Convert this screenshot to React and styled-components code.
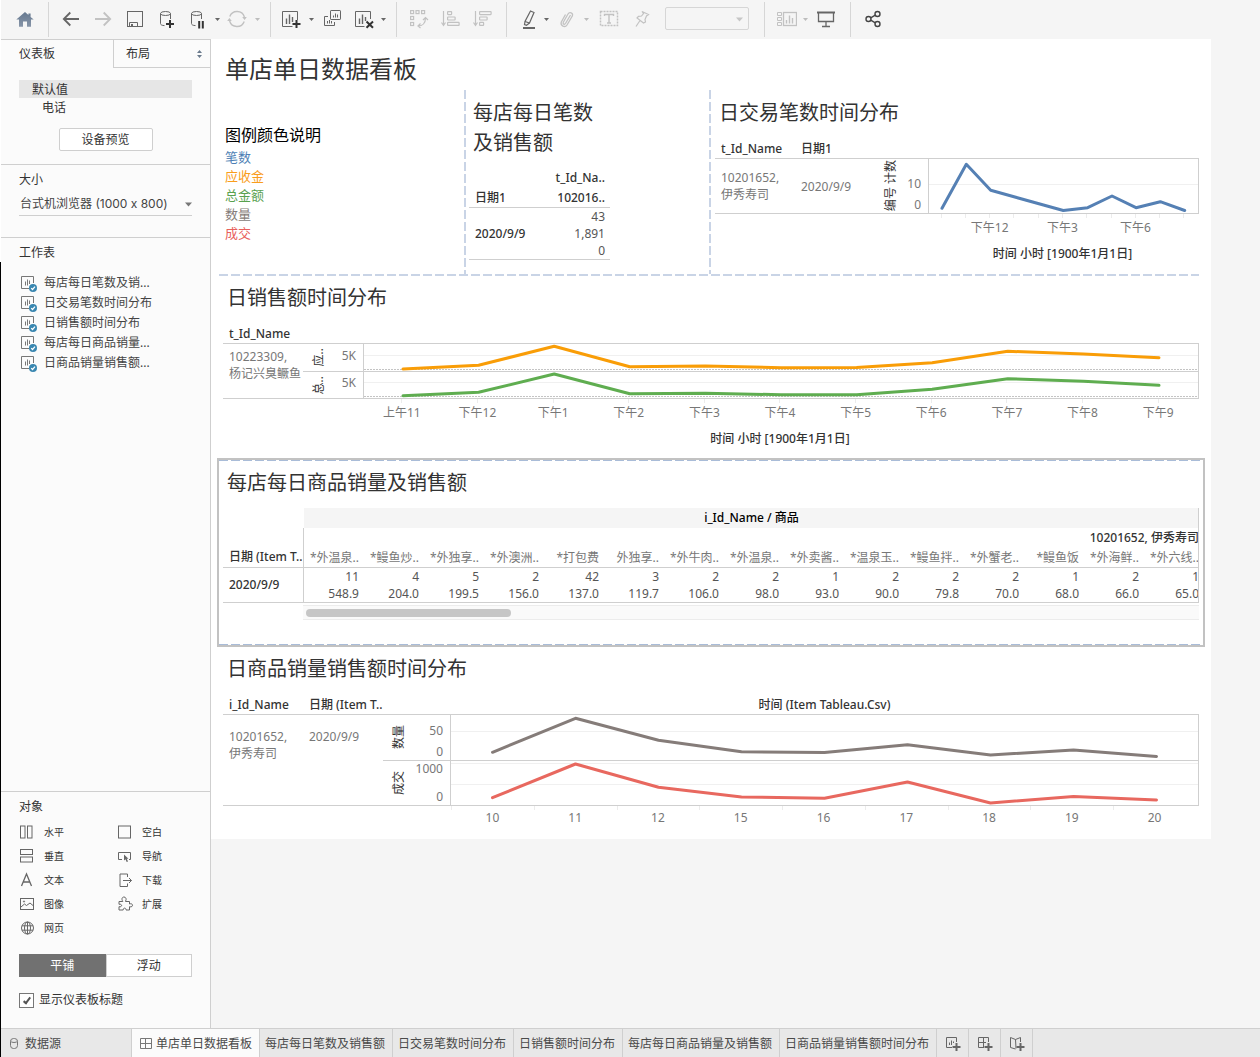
import React from "react";
import styled, { createGlobalStyle } from "styled-components";

const LINE = "#cfcfcf";
const DASH = "#c9d4e6";
const DASH_STRONG = "#a9bcd8";

const GlobalStyle = createGlobalStyle`
  *, *::before, *::after { box-sizing: border-box; }
  body {
    margin: 0;
    background: #f5f5f5;
    color: #333;
    font-family: "Noto Sans", "Noto Sans CJK SC", sans-serif;
    font-size: 12px;
    line-height: 16px;
  }
  button, select, input {
    margin: 0;
    padding: 0;
    border: 0;
    background: none;
    color: inherit;
    font: inherit;
  }
  button { cursor: pointer; }
  h1, h2, h3, p, ul { margin: 0; padding: 0; font-weight: 400; }
  ul { list-style: none; }
  svg { display: block; }
`;

const Page = styled.div`
  display: flex;
  flex-direction: column;
  min-height: 100vh;
  padding-left: 1px;
  background: linear-gradient(to bottom, #fff 262px, #000 262px) left top / 1px 100% no-repeat;
`;

/* ---------- toolbar ---------- */

const Toolbar = styled.header`
  display: flex;
  align-items: center;
  height: 39px;
  background: #f5f5f5;
`;

const ToolGroup = styled.div`
  display: flex;
  align-items: flex-start;
  height: 35px;
  padding: ${(p) => p.$pad};
  border-right: ${(p) => (p.$last ? "0" : "1px solid #d6d6d6")};
`;

const ToolButton = styled.button`
  display: flex;
  align-items: center;
  justify-content: center;
  width: ${(p) => p.$w || 32}px;
  height: 28px;
  color: ${(p) => (p.$off ? "#c2c2c2" : "#666")};
`;

const CaretButton = styled.button`
  display: flex;
  align-items: center;
  justify-content: center;
  width: 8px;
  height: 28px;
  color: ${(p) => (p.$off ? "#bdbdbd" : "#666")};
`;

const FitBox = styled.div`
  position: relative;
  width: 84px;
  margin: 2px 0 0 8px;
`;

const FitSelect = styled.select`
  display: block;
  width: 100%;
  height: 23px;
  border: 1px solid #d6d6d6;
  border-radius: 2px;
  appearance: none;
`;

const SelectCaret = styled.span`
  position: absolute;
  right: ${(p) => p.$right}px;
  top: 50%;
  margin-top: -2px;
  color: ${(p) => p.$color};
  pointer-events: none;
`;

const Caret = ({ size = 5 }) => (
  <svg width={size} height={Math.ceil(size * 0.6)} viewBox="0 0 10 6" aria-hidden="true">
    <path d="M0 0H10L5 6Z" fill="currentColor" />
  </svg>
);

const Icon = ({ children, sw = 1 }) => (
  <svg width="20" height="20" viewBox="0 0 20 20" fill="none" stroke="currentColor" strokeWidth={sw} aria-hidden="true">
    {children}
  </svg>
);

const HomeIcon = () => (
  <Icon>
    <defs>
      <linearGradient id="home" x1="0" y1="0" x2="0" y2="1">
        <stop offset="0" stopColor="#65788f" />
        <stop offset="1" stopColor="#8795a8" />
      </linearGradient>
    </defs>
    <path d="M10 3 1.3 10.6H4V17.7H8V12.5H12V17.7H16V10.6H18.7L15.6 7.9V4.4H13.4V6Z" fill="url(#home)" stroke="none" />
  </Icon>
);
const BackIcon = () => (
  <Icon sw={1.8}><path d="M18 10H3M9.3 3.5 2.8 10 9.3 16.5" /></Icon>
);
const ForwardIcon = () => (
  <Icon sw={1.8}><path d="M2 10H17M10.7 3.5 17.2 10 10.7 16.5" /></Icon>
);
const SaveIcon = () => (
  <Icon>
    <rect x="2.5" y="2.5" width="15" height="15" />
    <path d="M4.5 17.5V13.5H12.5V17.5" />
    <rect x="6" y="15" width="2" height="2.5" fill="currentColor" stroke="none" />
  </Icon>
);
const Cylinder = () => (
  <>
    <ellipse cx="8.5" cy="4.5" rx="5" ry="2" />
    <path d="M3.5 4.5V14.5C3.5 15.8 5 16.5 7.5 16.6M13.5 4.5V10" />
  </>
);
const DataPlusIcon = () => (
  <Icon><Cylinder /><path d="M13 11V19M9 15H17" stroke="#333" strokeWidth="2" /></Icon>
);
const DataPauseIcon = () => (
  <Icon><Cylinder /><path d="M11.2 12V19.5M14.8 12V19.5" stroke="#333" strokeWidth="2" /></Icon>
);
const RefreshIcon = () => (
  <Icon>
    <path d="M2.8 7.6A7.7 7.7 0 0 1 17.4 8M17.2 12.4A7.7 7.7 0 0 1 2.6 12" strokeWidth="1.4" />
    <path d="M15.2 8H19.8L17.6 11ZM.2 12H4.8L2.4 9Z" fill="currentColor" stroke="none" />
  </Icon>
);
const NewSheetIcon = () => (
  <Icon>
    <path d="M11.5 17.5H1.5V2.5H16.5V11" />
    <path d="M5.5 9.5V15M8.5 5.5V15M11.5 8V13" strokeWidth="1.4" />
    <path d="M15.5 11V19M11.5 15H19.5" stroke="#333" strokeWidth="2" />
  </Icon>
);
const DuplicateIcon = () => (
  <Icon>
    <rect x="8.5" y="1.5" width="10" height="9" rx=".6" />
    <path d="M11.5 6.5V8.5M13.5 4.5V8.5M15.5 5.5V8.5M6 7.5H2.5V16.5H12.5V13M5.5 12V14.5M7.5 11V14.5M9.5 12V14.5" />
  </Icon>
);
const ClearIcon = () => (
  <Icon>
    <path d="M10.5 17.5H1.5V2.5H16.5V10" />
    <path d="M5.5 9.5V15M8.5 5.5V15M11.5 8V12" strokeWidth="1.4" />
    <path d="M12.5 12.5 19 18.8M19 12.5 12.5 18.8" stroke="#333" strokeWidth="2" />
  </Icon>
);
const SwapIcon = () => (
  <Icon sw={1.2}>
    <rect x="1.6" y="1.6" width="3" height="3" /><rect x="7" y="1.6" width="3" height="3" />
    <rect x="12.6" y="1.6" width="3" height="3" /><rect x="1.6" y="7.5" width="3" height="3" />
    <rect x="1.6" y="13.5" width="3" height="3" />
    <path d="M9 17C13.5 17 16.5 14 16.5 9M11.5 14.5 9 17 11.5 19M14 11 16.5 8.5 19 11" />
  </Icon>
);
const SortAscIcon = () => (
  <Icon sw={1.2}>
    <path d="M2.5 2V16M.5 13.5 2.5 16.5 4.5 13.5" />
    <rect x="6.6" y="2.6" width="4" height="3" rx=".5" /><rect x="6.6" y="8" width="7.5" height="3" rx=".5" /><rect x="6.6" y="13.4" width="11.5" height="3" rx=".5" />
  </Icon>
);
const SortDescIcon = () => (
  <Icon sw={1.2}>
    <path d="M2.5 2V16M.5 13.5 2.5 16.5 4.5 13.5" />
    <rect x="6.6" y="2.6" width="11.5" height="3" rx=".5" /><rect x="6.6" y="8" width="7.5" height="3" rx=".5" /><rect x="6.6" y="13.4" width="4" height="3" rx=".5" />
  </Icon>
);
const HighlighterIcon = () => (
  <Icon sw={1.2}>
    <path d="M11.5 2 15 3.5 10.5 14 6 12.5ZM6 12.5 5.5 15.5 7.5 16.3 10.5 14" />
    <path d="M4 19H16" strokeWidth="2" />
  </Icon>
);
const ClipIcon = () => (
  <Icon sw={1.3}>
    <path d="M14.5 6 9.5 14.5C8.5 16 6.5 15 7.3 13.3L12 5C13.5 2.5 17.5 4 16.3 7L11 16C9 19 4 17 5.3 13L9.5 5.5" />
  </Icon>
);
const TextIcon = () => (
  <Icon>
    <rect x="1.5" y="2.5" width="17" height="14" strokeWidth="1.5" strokeDasharray="2 1" />
    <path d="M5.5 7V5.5H14.5V7M10 5.5V14M8 14H12" strokeWidth="1.4" />
  </Icon>
);
const PinIcon = () => (
  <Icon sw={1.2}>
    <path d="M10 2.5 16.5 5.5 14.5 7 13 10.5 13.5 13 11.5 14 5 9 6.500 7.300 9.500 7 11.500 4.500ZM8 11.5 4 17.500" />
  </Icon>
);
const CardsIcon = () => (
  <Icon>
    <path d="M.5 3.5H4.5V6.5H.5ZM.5 8.5H4.5V11.5H.5ZM.5 13.5H4.5V16.5H.5Z" />
    <rect x="6.5" y="3.5" width="13" height="13" strokeWidth="1.3" />
    <path d="M9.5 11V14.5M12.5 6.5V14.5M15.5 9V14.5" strokeWidth="1.4" />
  </Icon>
);
const PresentIcon = () => (
  <Icon>
    <path d="M1 3.5H19" strokeWidth="2" />
    <path d="M2.5 4V12.5H17.5V4M10 12.5V17.5M6 17.5H14" strokeWidth="1.3" />
  </Icon>
);
const ShareIcon = () => (
  <Icon sw={1.4}>
    <g stroke="#444"><circle cx="5.5" cy="10" r="2.5" /><circle cx="14.5" cy="5" r="2.5" /><circle cx="14.5" cy="15" r="2.5" />
    <path d="M7.7 8.8 12.3 6.2M7.7 11.2 12.3 13.8" /></g>
  </Icon>
);

const Tool = ({ label, icon: Glyph, off, w }) => (
  <ToolButton type="button" aria-label={label} $off={off} $w={w}><Glyph /></ToolButton>
);
const More = ({ label, off }) => (
  <CaretButton type="button" aria-label={label} $off={off}><Caret /></CaretButton>
);

/* ---------- side pane ---------- */

const Workspace = styled.div`
  display: flex;
  flex: 1;
`;

const Side = styled.aside`
  display: flex;
  flex-direction: column;
  flex: 0 0 210px;
  border-top: 1px solid ${LINE};
  border-right: 1px solid ${LINE};
  background: #fbfbfb;
`;

const SideTabs = styled.div`
  display: flex;
  height: 28px;
`;

const SideTab = styled.button`
  display: flex;
  align-items: center;
  justify-content: space-between;
  flex: ${(p) => (p.$active ? "0 0 112px" : "1")};
  padding: ${(p) => (p.$active ? "0 18px" : "0 8px 0 12px")};
  border: solid ${LINE};
  border-width: ${(p) => (p.$active ? "0" : "0 0 1px 1px")};
`;

const SideSection = styled.section`
  display: flex;
  flex-direction: column;
  padding: ${(p) => p.$pad};
  flex: ${(p) => (p.$grow ? "1" : "none")};
  border-bottom: ${(p) => (p.$last ? "0" : `1px solid ${LINE}`)};
`;

const SideTitle = styled.h2`
  font-size: 12px;
  line-height: 16px;
`;

const DeviceItem = styled.button`
  height: 18px;
  padding: 2px 0 0 ${(p) => (p.$active ? 13 : 23)}px;
  background: ${(p) => (p.$active ? "#e6e6e6" : "none")};
  text-align: left;
`;

const PreviewButton = styled.button`
  align-self: center;
  width: 94px;
  height: 23px;
  margin: 12px 0 0;
  border: 1px solid ${LINE};
  border-radius: 2px;
  background: #fff;
`;

const SizeBox = styled.div`
  position: relative;
  margin-top: 4px;
`;

const SizeSelect = styled.select`
  display: block;
  width: 100%;
  height: 24px;
  padding-left: 1px;
  border-bottom: 1px solid ${LINE};
  appearance: none;
  font-family: Inter, "Noto Sans CJK SC", sans-serif;
  color: #444;
`;

const SheetList = styled.ul`
  margin-top: 12px;
`;

const SheetItem = styled.li`
  display: flex;
  align-items: center;
  gap: 6px;
  height: 20px;
  padding-left: 2px;
  color: #444;
`;

const ObjectGrid = styled.div`
  display: grid;
  grid-template-columns: 98px 1fr;
  grid-auto-rows: 24px;
  margin-top: 5px;
`;

const ObjectButton = styled.button`
  display: flex;
  align-items: center;
  gap: 8px;
  padding-left: 1px;
  font-size: 10px;
  svg { color: #666; }
`;

const Toggle = styled.div`
  display: flex;
  height: 23px;
  margin-top: 14px;
`;

const ToggleButton = styled.button`
  flex: 1;
  border: 1px solid ${(p) => (p.$active ? "#717171" : LINE)};
  background: ${(p) => (p.$active ? "#717171" : "#fff")};
  color: ${(p) => (p.$active ? "#fff" : "#333")};
`;

const CheckLabel = styled.label`
  display: flex;
  align-items: center;
  gap: 5px;
  margin-top: 15px;
`;

const Check = styled.input`
  display: grid;
  place-items: center;
  width: 15px;
  height: 15px;
  border: 1px solid #777;
  background: #fff;
  appearance: none;
  &:checked::after {
    content: "";
    width: 4px;
    height: 8px;
    border: solid #555;
    border-width: 0 2px 2px 0;
    transform: rotate(38deg);
  }
`;

const SheetIcon = () => (
  <svg width="17" height="17" viewBox="0 0 17 17" fill="none" aria-hidden="true">
    <path d="M8 13.5H.5V1.5H12.5V8" stroke="#777" />
    <path d="M4.5 6.5V10.5M6.5 4.5V10.5M8.5 5.5V9" stroke="#777" />
    <circle cx="12" cy="13" r="4" fill="#3a87b0" />
    <path d="M10.2 13.2 11.5 14.5 14 11.6" stroke="#fff" strokeWidth="1.2" />
  </svg>
);

const Small = ({ children }) => (
  <svg width="16" height="16" viewBox="0 0 16 16" fill="none" stroke="currentColor" aria-hidden="true">{children}</svg>
);

const objects = [
  ["水平", <Small><rect x=".5" y="2" width="4.5" height="12" /><rect x="7.5" y="2" width="4.5" height="12" /></Small>],
  ["空白", <Small><rect x=".5" y="2" width="12" height="12" /></Small>],
  ["垂直", <Small><rect x=".5" y="1.5" width="12" height="5" /><rect x=".5" y="9" width="12" height="5" /></Small>],
  ["导航", <Small><path d="M4 11.5H.5V4.5H12.5V11.5H11" /><path d="M6 6.5V12.5L7.5 11.3 8.7 14 10 13.4 8.8 10.8H10.5Z" fill="currentColor" stroke="none" /></Small>],
  ["文本", <Small><path d="M1.5 14 6.5 2 11.5 14M3.3 10H9.7" strokeWidth="1.3" /></Small>],
  ["下载", <Small><path d="M9.5 5V2H2V14.5H9.5V11.5M5 8.5H13.5M11 6 13.5 8.5 11 11" /></Small>],
  ["图像", <Small><rect x=".5" y="2.5" width="13" height="11" /><path d="M1 11 4.5 8 6.5 9.5 10 7 13 9.5" /><circle cx="4" cy="5.5" r=".6" /></Small>],
  ["扩展", <Small><path d="M1 5.5H4.8C3 2.5 4.5 1 6 1S9 2.5 7.5 5.5H11.5V8C15.5 6.5 15.5 12 11.5 10.7V14H8C8.3 11.5 5 11.5 5.2 14H1V10.7C4.5 11.5 4.5 7.5 1 8.3Z" /></Small>],
  ["网页", <Small><circle cx="7.5" cy="8" r="6" /><ellipse cx="7.5" cy="8" rx="3" ry="6" /><path d="M7.5 2V14M2 5.8H13M2 10.2H13" /></Small>],
];

const SortMark = () => (
  <svg width="5" height="8" viewBox="0 0 5 8" fill="#6b7b8d" aria-hidden="true">
    <path d="M2.5 0 5 3H0ZM2.5 8 0 5H5Z" />
  </svg>
);

/* ---------- dashboard ---------- */

const Canvas = styled.main`
  flex: 0 1 1000px;
  min-width: 0;
  min-height: 800px;
  align-self: flex-start;
  background: #fff;
`;

const DashTitle = styled.h1`
  padding: 9px 14px 0;
  font-size: 24px;
  line-height: 42px;
`;

const hDash = (c) => `repeating-linear-gradient(to right, ${c} 0 9px, transparent 9px 12px)`;
const vDash = `repeating-linear-gradient(to bottom, ${DASH} 0 9px, transparent 9px 12px)`;

const TopRow = styled.div`
  display: grid;
  grid-template-columns: 1fr 1fr 2fr;
  margin: 0 12px 0 8px;
  padding-bottom: 2px;
  background: ${hDash(DASH)} left bottom / 100% 2px no-repeat;
`;

const Cell = styled.div`
  padding: ${(p) => p.$pad};
  background: ${(p) => (p.$divided ? `${vDash} left top / 2px 100% no-repeat` : "none")};
`;

const LegendTitle = styled.h2`
  color: #000;
  font-size: 16px;
  line-height: 24px;
`;

const LegendItem = styled.li`
  padding-top: 1px;
  color: ${(p) => p.$color};
  font-size: 13px;
  line-height: 18px;
`;

const Panel = styled.section`
  padding: 7px 12px 11px;
`;

const SelectedPanel = styled.section`
  margin: 0 6px;
  padding: 8px 4px 25px;
  border: 2px solid #c2c2c2;
  background: ${hDash(DASH_STRONG)} left top / 100% 1px no-repeat, ${hDash(DASH_STRONG)} left bottom / 100% 1px no-repeat;
`;

const VizTitle = styled.h2`
  padding-left: 4px;
  font-size: 20px;
  line-height: 30px;
`;

const VizHead = styled.div`
  display: flex;
  height: 18px;
  margin-top: 12px;
  line-height: 18px;
  font-weight: 500;
`;

const HeadCell = styled.span`
  flex: none;
  width: 80px;
  padding-left: 6px;
  white-space: nowrap;
`;

const HeadAxis = styled.span`
  flex: 1;
  text-align: center;
`;

const HeadGap = styled.span`
  flex: none;
  width: ${(p) => p.$w}px;
`;

const VizBody = styled.div`
  display: flex;
  border: solid ${LINE};
  border-width: 1px 1px 1px 0;
`;

const Dim = styled.div`
  display: flex;
  flex: none;
  align-items: ${(p) => (p.$top ? "flex-start" : "center")};
  width: 80px;
  padding: ${(p) => p.$top || 0}px 0 0 6px;
  color: #777;
  line-height: 17px;
  white-space: pre;
`;

const Measures = styled.div`
  flex: 1;
  min-width: 0;
`;

const Measure = styled.div`
  display: flex;
  border-top: ${(p) => (p.$first ? "0" : `1px solid ${LINE}`)};
`;

const Axis = styled.div`
  display: flex;
  flex: none;
  width: ${(p) => p.$w}px;
  height: ${(p) => p.$h}px;
`;

const AxisName = styled.div`
  display: flex;
  align-items: center;
  justify-content: center;
  flex: none;
  width: 32px;
  white-space: nowrap;
  span {
    writing-mode: vertical-rl;
    text-orientation: sideways;
    transform: rotate(180deg);
    line-height: 16px;
  }
`;

const Ticks = styled.div`
  display: flex;
  flex: 1;
  flex-direction: column;
  justify-content: space-between;
  align-items: flex-end;
  padding: ${(p) => p.$top}px 7px 0 0;
  margin-left: -8px;
  color: #777;
`;

const PlotArea = styled.div`
  flex: 1;
  min-width: 0;
  border-left: 1px solid ${LINE};
`;

const Plot = ({ w, h, points, color, grid = [], zero }) => (
  <PlotArea>
    <svg width="100%" height={h} viewBox={`0 0 ${w} ${h}`} preserveAspectRatio="none" fill="none">
      {grid.map((y) => <path key={y} d={`M0 ${y}H${w}`} stroke="#f0f0f0" />)}
      {zero && <path d={`M0 ${zero}H${w}`} stroke="#c4c4c4" strokeDasharray="2 1" vectorEffect="non-scaling-stroke" />}
      <polyline
        points={points.map((p) => p.join(",")).join(" ")}
        stroke={color}
        strokeWidth="3"
        strokeLinecap="round"
        strokeLinejoin="round"
        vectorEffect="non-scaling-stroke"
      />
    </svg>
  </PlotArea>
);

const AxisLabels = styled.div`
  display: grid;
  grid-template-columns: repeat(${(p) => p.$n}, minmax(0, 1fr));
  margin-left: ${(p) => p.$left}px;
  padding: 0 3px 0 1px;
  color: #777;
`;

const AxisLabel = styled.span`
  display: flex;
  justify-content: center;
  padding-top: ${(p) => (p.$edge ? 4 : 6)}px;
  background: linear-gradient(#ececec, #ececec) ${(p) => (p.$edge ? "left" : "center")} top / 1px 4px no-repeat;
  white-space: nowrap;
`;

const AxisTitle = styled.div`
  margin: 10px 0 0 ${(p) => p.$left}px;
  padding-right: 2px;
  text-align: center;
  font-weight: 500;
`;

const Chart = ({ heads, headTitle, dims, dimTop, axisW, w, measures, labels, edge, title }) => {
  const left = dims.length * 80 + axisW;
  return (
    <>
      <VizHead>
        {heads.map((t) => <HeadCell key={t}>{t}</HeadCell>)}
        {headTitle && <><HeadGap $w={axisW} /><HeadAxis>{headTitle}</HeadAxis></>}
      </VizHead>
      <VizBody>
        {dims.map((t) => <Dim key={t} $top={dimTop}>{t}</Dim>)}
        <Measures>
          {measures.map((m, i) => (
            <Measure key={m.name} $first={i === 0}>
              <Axis $w={axisW} $h={m.h}>
                <AxisName><span>{m.name}</span></AxisName>
                <Ticks $top={m.top}>{m.ticks.map((t) => <span key={t}>{t}</span>)}</Ticks>
              </Axis>
              <Plot w={w} h={m.h} points={m.points} color={m.color} grid={m.grid} zero={m.zero} />
            </Measure>
          ))}
        </Measures>
      </VizBody>
      <AxisLabels $n={labels.length} $left={left}>
        {labels.map((t, i) => <AxisLabel key={i} $edge={edge}>{t}</AxisLabel>)}
      </AxisLabels>
      {title && <AxisTitle $left={left}>{title}</AxisTitle>}
    </>
  );
};

const StoreTable = styled.table`
  width: 100%;
  margin-top: 10px;
  border-spacing: 0;
  border-bottom: 1px solid ${LINE};
  th, td { padding: 0 5px 0 6px; }
  th { font-weight: 500; text-align: left; }
  thead th { height: 20px; }
  thead th:last-child, td { text-align: right; }
  thead tr:last-child th { border-bottom: 1px solid ${LINE}; }
  td { height: 17px; color: #555; line-height: 17px; }
`;

const NarrowViz = styled.div`
  width: 141px;
`;

const TableScroll = styled.div`
  margin-top: 10px;
  border-right: 1px solid ${LINE};
  overflow: hidden;
`;

const ItemTable = styled.table`
  width: 981px;
  table-layout: fixed;
  border-spacing: 0;
  th, td { padding: 0 5px 0 0; white-space: nowrap; text-align: right; }
  th { height: 20px; font-weight: 400; }
  td { height: 17px; color: #555; line-height: 17px; }
  tbody tr:last-child td, tbody th { border-bottom: 1px solid ${LINE}; }
`;

const RowHead = styled.th`
  && {
    width: 81px;
    padding: 0 0 0 6px;
    border-right: 1px solid ${LINE};
    border-bottom: 1px solid ${LINE};
    font-weight: 500;
    text-align: left;
    vertical-align: ${(p) => (p.$low ? "bottom" : "middle")};
    line-height: 20px;
  }
`;

const Corner = styled.th`
  width: 81px;
`;

const BandHead = styled.th`
  && {
    background: #f5f5f5;
    color: #000;
    text-align: center;
    font-weight: 500;
  }
`;

const StoreHead = styled.th`
  && { font-weight: 500; }
`;

const ItemHead = styled.th`
  border-bottom: 1px solid ${LINE};
  color: #777;
`;

const ScrollTrack = styled.div`
  height: 15px;
  margin: 2px 0 0 80px;
  padding: 3px;
  border: solid #ececec;
  border-width: 1px 0;
  background: #fafafa;
`;

const ScrollThumb = styled.div`
  width: 23%;
  height: 8px;
  border-radius: 4px;
  background: #c6c6c6;
`;

const legend = [
  ["笔数", "#4e7fb5"], ["应收金", "#f99d1c"], ["总金额", "#59a14f"], ["数量", "#857c79"], ["成交", "#e8605c"],
];

const items = [
  ["*外温泉..", "11", "548.9"], ["*鳗鱼炒..", "4", "204.0"], ["*外独享..", "5", "199.5"],
  ["*外澳洲..", "2", "156.0"], ["*打包费", "42", "137.0"], ["外独享..", "3", "119.7"],
  ["*外牛肉..", "2", "106.0"], ["*外温泉..", "2", "98.0"], ["*外卖酱..", "1", "93.0"],
  ["*温泉玉..", "2", "90.0"], ["*鳗鱼拌..", "2", "79.8"], ["*外蟹老..", "2", "70.0"],
  ["*鳗鱼饭", "1", "68.0"], ["*外海鲜..", "2", "66.0"], ["*外六线..", "1", "65.0"],
];

const byStep = (start, step, ys) => ys.map((y, i) => [start + step * i, y]);

const countMeasures = [{
  name: "编号 计数", h: 54, top: 17, ticks: ["10", "0"], color: "#5580b4", grid: [25.5],
  points: [[13, 49.3], [37.3, 5.3], [61.7, 31.3], [134.3, 51.5], [158.7, 48.7], [183, 37], [207, 48.7], [231.3, 42.7], [255.7, 51.5]],
}];

const salesMeasures = [
  { name: "应..", h: 27, top: 4, ticks: ["5K"], color: "#f99d07", grid: [11.5], zero: 25.5,
    points: byStep(39, 75.6, [25, 21.3, 2.3, 22.7, 22, 23.7, 23.5, 18.7, 7.3, 10, 13.7]) },
  { name: "总..", h: 26, top: 3, ticks: ["5K"], color: "#5fad50", grid: [10.5], zero: 24.5,
    points: byStep(39, 75.6, [23.7, 20.3, 2, 21.7, 21.3, 22.7, 22.7, 17.3, 6.7, 9.3, 13.3]) },
];

const itemMeasures = [
  { name: "数量", h: 45, top: 8, ticks: ["50", "0"], color: "#857c79", grid: [16.5],
    points: byStep(41.5, 83, [37.3, 3.3, 25.3, 36.8, 37.5, 29.8, 40, 35, 41.5]) },
  { name: "成交", h: 44, top: 0, ticks: ["1000", "0"], color: "#e8685f", grid: [2.5, 23.5],
    points: byStep(41.5, 83, [36.7, 3, 26.3, 36, 37.3, 21, 42, 35.5, 39]) },
];

/* ---------- sheet tabs ---------- */

const TabBar = styled.nav`
  display: flex;
  height: 29px;
  border-top: 1px solid ${LINE};
  background: #e8e8e8;
`;

const SheetTab = styled.button`
  display: flex;
  align-items: center;
  gap: 4px;
  flex: none;
  width: ${(p) => (p.$w ? `${p.$w}px` : "auto")};
  padding: 1px 7px 0 ${(p) => (p.$icon ? 8 : 5)}px;
  border-right: 1px solid ${LINE};
  background: ${(p) => (p.$active ? "#fbfbfb" : "none")};
  color: #4a4a4a;
  white-space: nowrap;
`;

const AddTab = styled.button`
  display: flex;
  align-items: center;
  justify-content: center;
  flex: none;
  width: 32px;
  border-right: 1px solid ${LINE};
  color: #666;
`;

const tabs = ["每店每日笔数及销售额", "日交易笔数时间分布", "日销售额时间分布", "每店每日商品销量及销售额", "日商品销量销售额时间分布"];

const Plus = () => <path d="M11.5 8V16M7.5 12H15.5" strokeWidth="2" />;

export default function App() {
  return (
    <>
      <GlobalStyle />
      <Page>
        <Toolbar>
          <ToolGroup $pad="3px 7px 0 8px">
            <Tool label="主页" icon={HomeIcon} />
          </ToolGroup>
          <ToolGroup $pad="3px 9px 0 6px">
            <Tool label="撤消" icon={BackIcon} />
            <Tool label="重做" icon={ForwardIcon} off />
            <Tool label="保存" icon={SaveIcon} />
            <Tool label="新建数据源" icon={DataPlusIcon} />
            <Tool label="暂停自动更新" icon={DataPauseIcon} w={30} />
            <More label="更新选项" />
            <Tool label="运行更新" icon={RefreshIcon} off />
            <More label="运行选项" off />
          </ToolGroup>
          <ToolGroup $pad="3px 9px 0 4px">
            <Tool label="新建工作表" icon={NewSheetIcon} />
            <More label="新建选项" />
            <Tool label="复制工作表" icon={DuplicateIcon} w={34} />
            <Tool label="清除工作表" icon={ClearIcon} w={30} />
            <More label="清除选项" />
          </ToolGroup>
          <ToolGroup $pad="3px 7px 0 6px">
            <Tool label="交换行和列" icon={SwapIcon} off />
            <Tool label="升序排序" icon={SortAscIcon} off />
            <Tool label="降序排序" icon={SortDescIcon} off />
          </ToolGroup>
          <ToolGroup $pad="3px 15px 0 9px">
            <Tool label="突出显示" icon={HighlighterIcon} w={26} />
            <More label="突出显示选项" />
            <Tool label="组成员" icon={ClipIcon} w={32} off />
            <More label="组选项" off />
            <Tool label="显示标记标签" icon={TextIcon} w={37} off />
            <Tool label="固定轴" icon={PinIcon} w={30} off />
            <FitBox>
              <FitSelect aria-label="适合"><option value="" /></FitSelect>
              <SelectCaret $right={6} $color="#c6c6c6"><Caret size={7} /></SelectCaret>
            </FitBox>
          </ToolGroup>
          <ToolGroup $pad="3px 7px 0 8px">
            <Tool label="显示卡" icon={CardsIcon} w={28} off />
            <More label="卡选项" off />
            <Tool label="演示模式" icon={PresentIcon} w={34} />
          </ToolGroup>
          <ToolGroup $pad="3px 6px 0 6px" $last>
            <Tool label="共享" icon={ShareIcon} />
          </ToolGroup>
        </Toolbar>

        <Workspace>
          <Side>
            <SideTabs>
              <SideTab type="button" $active>仪表板</SideTab>
              <SideTab type="button">布局<SortMark /></SideTab>
            </SideTabs>
            <SideSection $pad="12px 18px 13px">
              <DeviceItem type="button" $active>默认值</DeviceItem>
              <DeviceItem type="button">电话</DeviceItem>
              <PreviewButton type="button">设备预览</PreviewButton>
            </SideSection>
            <SideSection $pad="7px 18px 21px">
              <SideTitle as="label" htmlFor="size">大小</SideTitle>
              <SizeBox>
                <SizeSelect id="size"><option>台式机浏览器 (1000 x 800)</option></SizeSelect>
                <SelectCaret $right={0} $color="#777"><Caret size={7} /></SelectCaret>
              </SizeBox>
            </SideSection>
            <SideSection $pad="7px 18px" $grow>
              <SideTitle>工作表</SideTitle>
              <SheetList>
                {["每店每日笔数及销...", "日交易笔数时间分布", "日销售额时间分布", "每店每日商品销量...", "日商品销量销售额..."].map((t) => (
                  <SheetItem key={t}><SheetIcon />{t}</SheetItem>
                ))}
              </SheetList>
            </SideSection>
            <SideSection $pad="7px 18px 20px" $last>
              <SideTitle>对象</SideTitle>
              <ObjectGrid>
                {objects.map(([name, icon]) => (
                  <ObjectButton type="button" key={name}>{icon}{name}</ObjectButton>
                ))}
              </ObjectGrid>
              <Toggle>
                <ToggleButton type="button" $active>平铺</ToggleButton>
                <ToggleButton type="button">浮动</ToggleButton>
              </Toggle>
              <CheckLabel><Check type="checkbox" defaultChecked />显示仪表板标题</CheckLabel>
            </SideSection>
          </Side>

          <Canvas>
            <DashTitle>单店单日数据看板</DashTitle>
            <TopRow>
              <Cell $pad="33px 6px 0">
                <LegendTitle>图例颜色说明</LegendTitle>
                <ul>
                  {legend.map(([name, color]) => <LegendItem key={name} $color={color}>{name}</LegendItem>)}
                </ul>
              </Cell>
              <Cell $pad="8px 0 0 5px" $divided>
                <NarrowViz>
                  <VizTitle>每店每日笔数及销售额</VizTitle>
                  <StoreTable>
                    <thead>
                      <tr><th /><th>t_Id_Na..</th></tr>
                      <tr><th>日期1</th><th>102016..</th></tr>
                    </thead>
                    <tbody>
                      <tr><th rowSpan={3}>2020/9/9</th><td>43</td></tr>
                      <tr><td>1,891</td></tr>
                      <tr><td>0</td></tr>
                    </tbody>
                  </StoreTable>
                </NarrowViz>
              </Cell>
              <Cell $pad="8px 0 12px 6px" $divided>
                <VizTitle>日交易笔数时间分布</VizTitle>
                <Chart
                  heads={["t_Id_Name", "日期1"]}
                  dims={["10201652,\n伊秀寿司", "2020/9/9"]}
                  axisW={53}
                  w={269}
                  measures={countMeasures}
                  labels={["", "", "下午12", "", "", "下午3", "", "", "下午6", "", ""]}
                  title="时间 小时 [1900年1月1日]"
                />
              </Cell>
            </TopRow>

            <Panel>
              <VizTitle>日销售额时间分布</VizTitle>
              <Chart
                heads={["t_Id_Name"]}
                dims={["10223309,\n杨记兴臭鳜鱼"]}
                dimTop={4}
                axisW={60}
                w={834}
                measures={salesMeasures}
                labels={["上午11", "下午12", "下午1", "下午2", "下午3", "下午4", "下午5", "下午6", "下午7", "下午8", "下午9"]}
                title="时间 小时 [1900年1月1日]"
              />
            </Panel>

            <SelectedPanel>
              <VizTitle>每店每日商品销量及销售额</VizTitle>
              <TableScroll>
                <ItemTable>
                  <thead>
                    <tr><Corner /><BandHead colSpan={15}>i_Id_Name / 商品</BandHead></tr>
                    <tr>
                      <RowHead rowSpan={2} $low>日期 (Item T..</RowHead>
                      <StoreHead colSpan={15}>10201652, 伊秀寿司</StoreHead>
                    </tr>
                    <tr>{items.map(([name], i) => <ItemHead key={i}>{name}</ItemHead>)}</tr>
                  </thead>
                  <tbody>
                    <tr>
                      <RowHead rowSpan={2}>2020/9/9</RowHead>
                      {items.map((r, i) => <td key={i}>{r[1]}</td>)}
                    </tr>
                    <tr>{items.map((r, i) => <td key={i}>{r[2]}</td>)}</tr>
                  </tbody>
                </ItemTable>
              </TableScroll>
              <ScrollTrack><ScrollThumb /></ScrollTrack>
            </SelectedPanel>

            <Panel>
              <VizTitle>日商品销量销售额时间分布</VizTitle>
              <Chart
                heads={["i_Id_Name", "日期 (Item T.."]}
                headTitle="时间 (Item Tableau.Csv)"
                dims={["10201652,\n伊秀寿司", "2020/9/9"]}
                dimTop={13}
                axisW={67}
                w={747}
                measures={itemMeasures}
                labels={["10", "11", "12", "15", "16", "17", "18", "19", "20"]}
                edge
              />
            </Panel>
          </Canvas>
        </Workspace>

        <TabBar>
          <SheetTab type="button" $w={131} $icon>
            <svg width="12" height="14" viewBox="0 0 12 14" fill="none" stroke="#777" aria-hidden="true">
              <rect x="1.5" y="1.5" width="7" height="10" rx="3" /><path d="M1.5 4C2 6 8 6 8.500 4" />
            </svg>
            数据源
          </SheetTab>
          <SheetTab type="button" $active $icon>
            <svg width="12" height="12" viewBox="0 0 12 12" fill="none" stroke="#777" aria-hidden="true"><path d="M.5.5H11.500V10.500H.5ZM5.500.5V10.500M.5 5.500H11.500" /></svg>
            单店单日数据看板
          </SheetTab>
          {tabs.map((t) => <SheetTab type="button" key={t}>{t}</SheetTab>)}
          <AddTab type="button" aria-label="新建工作表">
            <Small><path d="M7 12.5H1.5V2.5H11.5V7M4.5 7.5V10M6.5 5.5V10M8.5 6.5V8" /><Plus /></Small>
          </AddTab>
          <AddTab type="button" aria-label="新建仪表板">
            <Small><path d="M7 12.5H1.5V2.5H11.5V7M6.5 2.5V12M1.5 7.5H9" /><Plus /></Small>
          </AddTab>
          <AddTab type="button" aria-label="新建故事">
            <Small><path d="M7 13.5 6.5 4.5 1.5 2.5V12.5L6.5 14M6.5 4.5 11.5 2.5V7" /><Plus /></Small>
          </AddTab>
        </TabBar>
      </Page>
    </>
  );
}
